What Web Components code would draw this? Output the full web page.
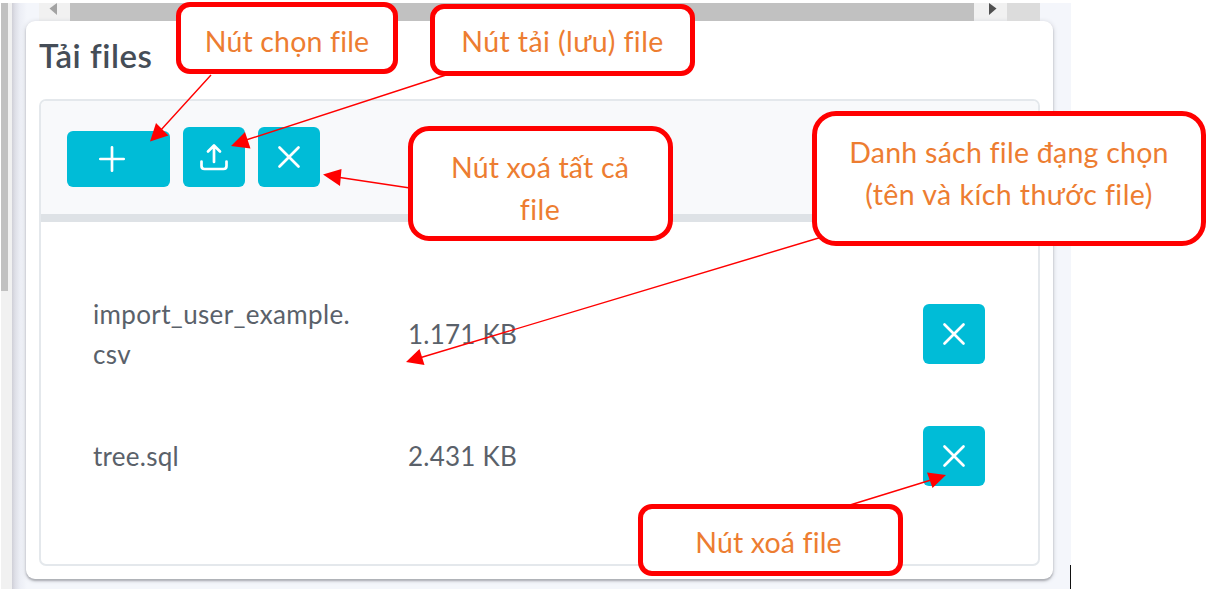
<!DOCTYPE html>
<html lang="vi">
<head>
<meta charset="utf-8">
<title>Tải files</title>
<style>
html,body{margin:0;background:#fff;overflow:hidden}
body{font-family:Lato,"Open Sans",sans-serif;width:1216px;height:589px;position:relative}
</style>
</head>
<body>
<upload-page></upload-page>
<script>
const define=(name,html,init)=>customElements.define(name,class extends HTMLElement{
  connectedCallback(){
    if(this.shadowRoot)return;
    const t=document.createElement('template');
    t.innerHTML=html;
    this.attachShadow({mode:'open'}).append(t.content.cloneNode(true));
    if(init)init(this,this.shadowRoot);
  }
});

/* One line of text, tracked to fill the width given in its "w" attribute. */
define('fit-text','<style>:host{display:block;white-space:nowrap;width:max-content}span{display:inline-block}</style><span><slot></slot></span>',(el,root)=>{
  const s=root.querySelector('span'),n=[...el.textContent].length;
  const gap=(+el.getAttribute('w')-s.getBoundingClientRect().width)/n;
  s.style.letterSpacing=gap.toFixed(3)+'px';
});

const glyphs={
  plus:'<path d="M18 6.3V29.7M6.3 18H29.7"/>',
  close:'<path d="M8.500 8.500L27.500 27.500M27.500 8.500L8.500 27.500"/>',
  upload:'<path d="M18 23V7M12 12.500L18 6.500L24 12.500M5.500 22.500V27Q5.500 30 8.500 30H27.500Q30.500 30 30.500 27V22.500"/>'
};
define('icon-button',`<style>
:host{display:block;width:62px;height:60px;flex:none}
button{all:unset;box-sizing:border-box;width:100%;height:100%;display:flex;align-items:center;justify-content:center;background:#00bcd7;border-radius:6px;cursor:pointer}
svg{display:block;width:36px;height:36px;fill:none;stroke:#fff;stroke-width:2.7;stroke-linecap:round;stroke-linejoin:round}
:host([icon=plus]){width:103px;height:56px}
:host([icon=plus]) button{padding-right:13px}
</style><button><svg viewBox="0 0 36 36"></svg></button>`,(el,root)=>{
  root.querySelector('svg').innerHTML=glyphs[el.getAttribute('icon')];
});

define('file-row',`<style>
:host{display:grid;grid-template-columns:315px 1fr 62px;align-items:center;height:122px;font-size:26px;line-height:40px;color:#5a616a}
</style><slot name="name"></slot><slot name="size"></slot><icon-button icon="close"></icon-button>`);

define('file-panel',`<style>
:host{display:flex;flex-direction:column;box-sizing:border-box;height:467px;border:2px solid #e4e8ec;border-radius:7px;overflow:hidden;background:#fff}
header{display:flex;align-items:flex-end;gap:13px;box-sizing:border-box;height:121px;padding:0 25.500px 27px;background:#f8f9fb;border-bottom:8px solid #dee2e6}
main{padding:51px 53px 0 52px}
</style>
<header><icon-button icon="plus"></icon-button><icon-button icon="upload"></icon-button><icon-button icon="close"></icon-button></header>
<main>
<file-row><div slot="name"><fit-text w="257">import_user_example.</fit-text><fit-text w="38">csv</fit-text></div><fit-text slot="size" w="109">1.171 KB</fit-text></file-row>
<file-row><fit-text slot="name" w="86">tree.sql</fit-text><fit-text slot="size" w="109">2.431 KB</fit-text></file-row>
</main>`);

define('upload-card',`<style>
:host{display:block;box-sizing:border-box;width:1027px;height:558px;margin-left:14px;padding:10px 13px;background:#fff;border-radius:9px;box-shadow:0 2px 2px #aeb0b6,0 1px 5px #c9cbd3}
h2{margin:0;height:68px;font-size:33px;line-height:48px;font-weight:600;color:#454d57}
</style><h2><fit-text w="113">Tải files</fit-text></h2><file-panel></file-panel>`);

define('h-scrollbar',`<style>
:host{display:grid;grid-template-columns:31px 904px 33px 33px;height:18px;margin-left:27px;width:1001px;background:#f1f1f1}
i{background:#c1c1c1}b{background:#dcdcdc}
svg{display:block;width:31px;height:18px}
</style><svg viewBox="0 0 31 18"><path d="M10.5 5.5L18 0V12Z" fill="#a3a3a3"/></svg><i></i><svg viewBox="0 0 31 18"><path d="M22.5 5.5L15 0V12Z" fill="#505050"/></svg><b></b>`);

define('callout-box',`<style>
:host{position:absolute;box-sizing:border-box;display:flex;flex-direction:column;align-items:center;border:5px solid #f00;background:#fff;color:#ed7d31;font-size:28.5px;line-height:41.5px}
</style><slot></slot>`);

define('callout-arrows',`<style>:host{position:absolute;inset:0}svg{display:block}</style>
<svg width="1216" height="589" viewBox="0 0 1216 589" fill="#f00">
<g stroke="#f00" stroke-width="1.4"><path d="M211 75L160 131M446 75L246 140M410 188L340 177.5M822 237L421 357.5M850 505L931 480"/></g>
<path d="M150 141.5L156 123L168.500 135.500ZM231 146L245 132L250.500 148.500ZM323 174.500L341.500 169L340 186ZM406 362L419.500 349L424.500 365ZM946 475L927 472.500L932.500 488Z"/>
</svg>`);

define('upload-page',`<style>
:host{display:flex;height:589px;padding-top:3px;box-sizing:border-box;position:relative}
.rail{box-sizing:border-box;width:12px;padding-left:1px;background:linear-gradient(90deg,#fff 1px,#f1f1f1 1px)}
.rail i{display:block;width:7px;height:288px;background:#c1c1c1}
.app{width:1059px;background:linear-gradient(90deg,#cfcfd7 0,#dedfe7 3px,#eceef5 8px,#f4f6fb 15px)}
.caret{position:absolute;left:1070px;top:565px;width:1px;height:24px;background:#111}
</style>
<div class="rail"><i></i></div>
<div class="app"><h-scrollbar></h-scrollbar><upload-card></upload-card></div>
<div class="caret"></div>
<callout-arrows></callout-arrows>
<callout-box style="left:176px;top:2px;width:222px;height:72px;border-radius:14px;padding-top:14px"><fit-text w="164">Nút chọn file</fit-text></callout-box>
<callout-box style="left:430px;top:4px;width:265px;height:72px;border-radius:14px;padding-top:12px"><fit-text w="202">Nút tải (lưu) file</fit-text></callout-box>
<callout-box style="left:408px;top:126px;width:265px;height:115px;border-radius:21px;padding:16px 1px 0 0"><fit-text w="178">Nút xoá tất cả</fit-text><fit-text w="40">file</fit-text></callout-box>
<callout-box style="left:812px;top:111px;width:394px;height:135px;border-radius:24px;padding-top:16px"><fit-text w="319">Danh sách file đạng chọn</fit-text><fit-text w="287">(tên và kích thước file)</fit-text></callout-box>
<callout-box style="left:638px;top:504px;width:265px;height:72px;border-radius:14px;padding:13px 4px 0 0"><fit-text w="146">Nút xoá file</fit-text></callout-box>`);
</script>
</body>
</html>
